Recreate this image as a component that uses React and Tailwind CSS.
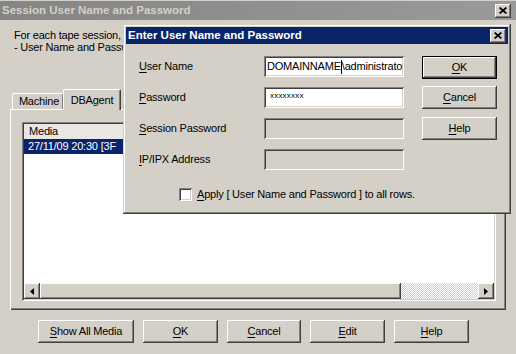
import React from "react";

const raised =
  "shadow-[inset_-1px_-1px_#404040,inset_1px_1px_#ffffff,inset_-2px_-2px_#808080,inset_2px_2px_#d4d0c8]";
const sunken =
  "shadow-[inset_1px_1px_#808080,inset_-1px_-1px_#ffffff,inset_2px_2px_#404040,inset_-2px_-2px_#d4d0c8]";

function Acc({ children }) {
  return <span className="underline underline-offset-[2px]">{children}</span>;
}

function CloseBox() {
  return (
    <div className={`flex h-[14px] w-[16px] items-center justify-center bg-[#d4d0c8] ${raised}`}>
      <svg width="8" height="7" viewBox="0 0 8 7">
        <path d="M0.6 0.5L7.4 6.5M7.4 0.5L0.6 6.5" stroke="#000" strokeWidth="1.7" />
      </svg>
    </div>
  );
}

function WinButton({ children, width = "w-[75px]", isDefault = false, className = "" }) {
  if (isDefault) {
    return (
      <button className={`h-[23px] ${width} border border-black bg-[#d4d0c8] ${className}`}>
        <div className={`flex h-full w-full items-center justify-center ${raised}`}>{children}</div>
      </button>
    );
  }
  return (
    <button className={`flex h-[23px] ${width} items-center justify-center bg-[#d4d0c8] ${raised} ${className}`}>
      {children}
    </button>
  );
}

function Field({ children, disabled }) {
  return (
    <div
      className={`flex h-[21px] w-[140px] items-center overflow-hidden whitespace-nowrap pl-[3px] ${
        disabled ? "bg-[#d4d0c8]" : "bg-white"
      } ${sunken}`}
    >
      {children}
    </div>
  );
}

function Arrow({ dir }) {
  return (
    <div className={`flex h-[16px] w-[16px] shrink-0 items-center justify-center bg-[#d4d0c8] ${raised}`}>
      <svg width="4" height="7" viewBox="0 0 4 7">
        {dir === "left" ? <path d="M4 0L0 3.5L4 7Z" fill="#000" /> : <path d="M0 0L4 3.5L0 7Z" fill="#000" />}
      </svg>
    </div>
  );
}

export default function App() {
  const rows = [
    { label: "User Name", acc: "U", value: "text" },
    { label: "Password", acc: "P", value: "pwd" },
    { label: "Session Password", acc: "S", value: "off" },
    { label: "IP/IPX Address", acc: "I", value: "off" },
  ];

  return (
    <div className="relative h-[354px] w-[516px] overflow-hidden bg-[#d4d0c8] font-['Liberation_Sans',Arial,sans-serif] text-[11px] leading-[13px] tracking-[-0.2px] text-black">
      {/* outer window */}
      <div className="mt-[1px] flex h-[19px] items-center justify-between bg-linear-to-r from-[#858585] to-[#9a9a9a] pl-[2px] pr-[5px]">
        <span className="text-[11.5px] font-bold tracking-normal text-[#d4d0c8]">Session User Name and Password</span>
        <CloseBox />
      </div>

      {/* description, the rest of it sits under the dialog */}
      <div className="w-[123px] overflow-hidden pl-[14px] pt-[9px] leading-[12px]">
        <p className="whitespace-nowrap">For each tape session,</p>
        <p className="whitespace-nowrap">- User Name and Passw</p>
      </div>

      <div className="ml-[10px] mt-[36px] w-[496px]">
        <div className="flex h-[20px] items-end pl-[2px]">
          <div className="flex h-[16px] w-[51px] items-center justify-center rounded-tl-[2px] border-l border-t border-white pl-[2px] shadow-[inset_-1px_0_#808080]">
            Machine
          </div>
          <div className="relative z-10 -mb-[1px] flex h-[21px] w-[58px] items-start justify-center rounded-t-[2px] border-l border-r border-t border-l-white border-r-[#404040] border-t-white bg-[#d4d0c8] pt-[4px] shadow-[inset_-1px_0_#808080]">
            DBAgent
          </div>
        </div>

        <div className="h-[201px] pb-[9px] pl-[12px] pr-[10px] pt-[13px] shadow-[inset_1px_1px_#ffffff,inset_-1px_-1px_#404040,inset_-2px_-2px_#808080]">
          <div className={`flex h-full flex-col bg-white p-[2px] ${sunken}`}>
            <div className="flex h-[15px] bg-[#e9e7e2]">
              <div className="flex w-[170px] items-center pl-[5px]">Media</div>
            </div>
            <div className="flex h-[15px] w-[100px] items-center overflow-hidden whitespace-nowrap bg-[#0a246a] pl-[4px] text-white">
              27/11/09 20:30 [3F
            </div>
            <div className="flex-1" />
            <div className="flex h-[16px]">
              <Arrow dir="left" />
              <div className={`h-[16px] w-[361px] shrink-0 bg-[#d4d0c8] ${raised}`} />
              <div className="flex-1 bg-[repeating-conic-gradient(#d4d0c8_0_25%,#ffffff_0_50%)] bg-size-[2px_2px]" />
              <Arrow dir="right" />
            </div>
          </div>
        </div>
      </div>

      <div className="mt-[10px] flex gap-[9px] pl-[38px]">
        <WinButton width="w-[96px]">
          <span>
            <Acc>S</Acc>how All Media
          </span>
        </WinButton>
        <WinButton>
          <span>
            <Acc>O</Acc>K
          </span>
        </WinButton>
        <WinButton width="w-[74px]">
          <span>
            <Acc>C</Acc>ancel
          </span>
        </WinButton>
        <WinButton>
          <span>
            <Acc>E</Acc>dit
          </span>
        </WinButton>
        <WinButton>
          <span>
            <Acc>H</Acc>elp
          </span>
        </WinButton>
      </div>

      {/* overlay dialog */}
      <div className="absolute left-[123px] top-[24px] h-[190px] w-[388px] bg-[#d4d0c8] p-[3px] shadow-[inset_-1px_-1px_#404040,inset_1px_1px_#d4d0c8,inset_-2px_-2px_#808080,inset_2px_2px_#ffffff]">
        <div className="flex h-[17px] items-center justify-between bg-[#0a246a] pl-[2px] pr-[2px]">
          <span className="text-[11.5px] font-bold tracking-normal text-white">Enter User Name and Password</span>
          <CloseBox />
        </div>

        <div className="flex pl-[13px] pt-[12px]">
          <div className="flex flex-col gap-[10px]">
            {rows.map((r) => (
              <div key={r.label} className="flex items-center">
                <span className="w-[125px] whitespace-nowrap">
                  <Acc>{r.acc}</Acc>
                  {r.label.slice(1)}
                </span>
                {r.value === "text" && (
                  <Field>
                    DOMAINNAME
                    <span className="inline-block h-[14px] w-[1px] bg-black" />
                    {"\\administrato"}
                  </Field>
                )}
                {r.value === "pwd" && (
                  <Field>
                    <span className="pl-[3px] pb-[3px] text-[8px] leading-[8px] tracking-[0.2px]">xxxxxxxx</span>
                  </Field>
                )}
                {r.value === "off" && <Field disabled />}
              </div>
            ))}
          </div>
          <div className="ml-[18px] flex flex-col">
            <WinButton isDefault>
              <span>
                <Acc>O</Acc>K
              </span>
            </WinButton>
            <WinButton className="mt-[7px]">
              <span>
                <Acc>C</Acc>ancel
              </span>
            </WinButton>
            <WinButton className="mt-[8px]">
              <span>
                <Acc>H</Acc>elp
              </span>
            </WinButton>
          </div>
        </div>

        <div className="ml-[53px] mt-[18px] flex items-center gap-[5px]">
          <div className={`h-[13px] w-[13px] bg-white ${sunken}`} />
          <span className="whitespace-nowrap">
            <Acc>A</Acc>pply [ User Name and Password ] to all rows.
          </span>
        </div>
      </div>
    </div>
  );
}
